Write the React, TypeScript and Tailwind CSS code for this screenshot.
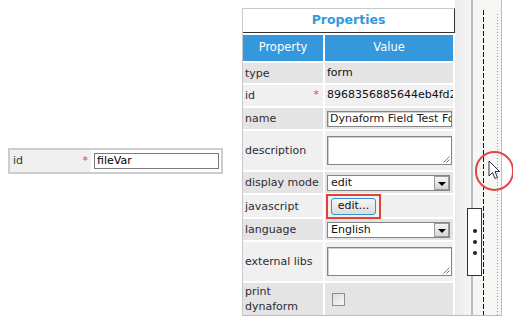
import type { ReactNode } from "react";

const LIGHT = "bg-[#f0f0f0]";
const DARK = "bg-[#e4e4e4]";

const Grip = () => (
  <svg className="absolute right-[1px] bottom-[1px]" width="8" height="8" viewBox="0 0 8 8">
    <path d="M7.5 1.5 L1.5 7.5 M7.5 4.5 L4.5 7.5" stroke="#7d7d7d" strokeWidth="1" />
  </svg>
);

const TextBox = ({ children }: { children?: ReactNode }) => (
  <div className="h-[16px] w-[125px] overflow-hidden whitespace-nowrap border border-[#858585] bg-white pl-[2px] leading-[14px] text-[#222] shadow-[inset_1px_1px_0_#cfcfcf]">
    {children}
  </div>
);

const Area = () => (
  <div className="relative h-[29px] w-[125px] border border-[#858585] bg-white shadow-[inset_1px_1px_0_#cfcfcf]">
    <Grip />
  </div>
);

const Select = ({ value }: { value: string }) => (
  <div className="flex h-[16px] w-[123px] border border-[#858585] bg-white leading-[14px] text-[#111]">
    <div className="flex-1 pl-[3px]">{value}</div>
    <div className="flex w-[15px] items-end justify-center border border-[#9a9a9a] bg-gradient-to-b from-[#f4f4f4] to-[#d6d6d6] pb-[3px]">
      <div className="h-0 w-0 border-x-[4px] border-t-[4px] border-x-transparent border-t-black" />
    </div>
  </div>
);

const Row = ({
  label,
  value,
  h,
  bg,
  star,
}: {
  label: ReactNode;
  value?: ReactNode;
  h: string;
  bg: string;
  star?: boolean;
}) => (
  <>
    <div className={`${h} ${bg} flex items-center pl-[2px] pr-[4px] text-[#2e2b35]`}>
      <span className="flex-1 leading-[15px]">{label}</span>
      {star && <span className="text-[#e0407a]">*</span>}
    </div>
    <div className={`${h} ${bg} flex items-center pl-[2px] text-[#111]`}>{value}</div>
  </>
);

export default function App() {
  return (
    <div className="relative flex h-[327px] w-[513px] overflow-hidden bg-white font-['DejaVu_Sans',sans-serif] text-[11px]">
      {/* field preview on the canvas */}
      <div className="w-[242px] pl-2 pt-[148px]">
        <div className="flex h-[26px] w-[215px] border-2 border-[#cdcdcd] bg-white">
          <div className="flex w-[81px] items-center bg-[#f0f0f0] pl-[3px] pr-[3px] text-[#333]">
            <span className="flex-1">id</span>
            <span className="text-[#e0407a]">*</span>
          </div>
          <div className="flex flex-1 items-center pl-[3px]">
            <div className="h-[16px] w-[125px] border border-[#7a7a7a] bg-white pl-[2px] leading-[14px] text-black">
              fileVar
            </div>
          </div>
        </div>
      </div>

      {/* properties panel */}
      <div className="flex h-[316px] border-b border-[#bdbdbd]">
        <div className="w-[213px] pt-2">
          <div className="h-full border-l border-[#c8c8c8]">
            <div className="flex h-[25px] items-center justify-center border-t border-r border-b border-t-[#c8c8c8] border-r-[#333] border-b-[#333] text-[12.5px] font-bold text-[#3598dc]">
              Properties
            </div>
            <div className="mt-[2px] grid grid-cols-[80px_128px] gap-[2px]">
              <div className="flex h-[26px] items-center justify-center bg-[#3598dc] text-[11.5px] text-white">Property</div>
              <div className="flex h-[26px] items-center justify-center bg-[#3598dc] text-[11.5px] text-white">Value</div>
              <Row label="type" value="form" h="h-[20px]" bg={DARK} />
              <Row
                label="id"
                star
                value={<span className="block w-[126px] overflow-hidden whitespace-nowrap">8968356885644eb4fd2</span>}
                h="h-[21px]"
                bg={LIGHT}
              />
              <Row label="name" value={<TextBox>Dynaform Field Test Form</TextBox>} h="h-[21px]" bg={DARK} />
              <Row label="description" value={<Area />} h="h-[39px]" bg={LIGHT} />
              <Row label="display mode" value={<Select value="edit" />} h="h-[21px]" bg={DARK} />
              <Row
                label="javascript"
                value={
                  <div className="-ml-[1px] flex h-[25px] w-[55px] shrink-0 items-center justify-center border-2 border-[#e2413a]">
                    <div className="flex h-[17px] w-[45px] items-center justify-center rounded-[3px] border border-[#3c8fd0] bg-gradient-to-b from-[#f6f6f6] to-[#dcdcdc] text-[#111]">
                      edit...
                    </div>
                  </div>
                }
                h="h-[22px]"
                bg={LIGHT}
              />
              <Row label="language" value={<Select value="English" />} h="h-[21px]" bg={DARK} />
              <Row label="external libs" value={<Area />} h="h-[39px]" bg={LIGHT} />
              <Row
                label={
                  <>
                    print
                    <br />
                    dynaform
                  </>
                }
                value={
                  <div className="ml-[5px] h-[13px] w-[13px] border border-[#8e8e8e] bg-gradient-to-br from-[#dedede] to-[#f6f6f6]" />
                }
                h="h-[32px]"
                bg={DARK}
              />
            </div>
          </div>
        </div>

        {/* scroll strip and splitter */}
        <div className="w-[16px] bg-gradient-to-r from-[#ebebeb] to-[#f5f5f5]" />
        <div className="w-[2px] bg-[#bcbcbc]" />
        <div className="flex w-[29px] border-r border-[#bdbdbd] bg-[#f6f6f5]">
          <div className="w-[10px]" />
          <div className="mt-[10px] w-[1px] bg-[repeating-linear-gradient(to_bottom,#111_0_5px,transparent_5px_7px)]" />
          <div className="w-[13px]" />
          <div className="mt-[14px] w-[1px] bg-[repeating-linear-gradient(to_bottom,#9a9a9a_0_1px,transparent_1px_3px)]" />
        </div>
      </div>

      {/* splitter handle */}
      <div className="absolute left-[467px] top-[208px] flex h-[68px] w-[15px] flex-col items-center justify-center gap-[7px] border border-[#333] bg-white">
        <span className="h-[4px] w-[4px] rounded-full bg-[#222]" />
        <span className="h-[4px] w-[4px] rounded-full bg-[#222]" />
        <span className="h-[4px] w-[4px] rounded-full bg-[#222]" />
      </div>

      {/* highlight circle and cursor */}
      <div className="absolute left-[475px] top-[151px] h-[40px] w-[39px] rounded-full border-2 border-[#e04646]" />
      <svg className="absolute left-[488px] top-[160px]" width="13" height="20" viewBox="0 0 13 20">
        <path d="M1 1 L1 16 L4.5 12.5 L7 18.5 L9.5 17.5 L7 11.5 L11.5 11.5 Z" fill="white" stroke="#2b2b3a" strokeWidth="1" strokeLinejoin="round" />
      </svg>
    </div>
  );
}
